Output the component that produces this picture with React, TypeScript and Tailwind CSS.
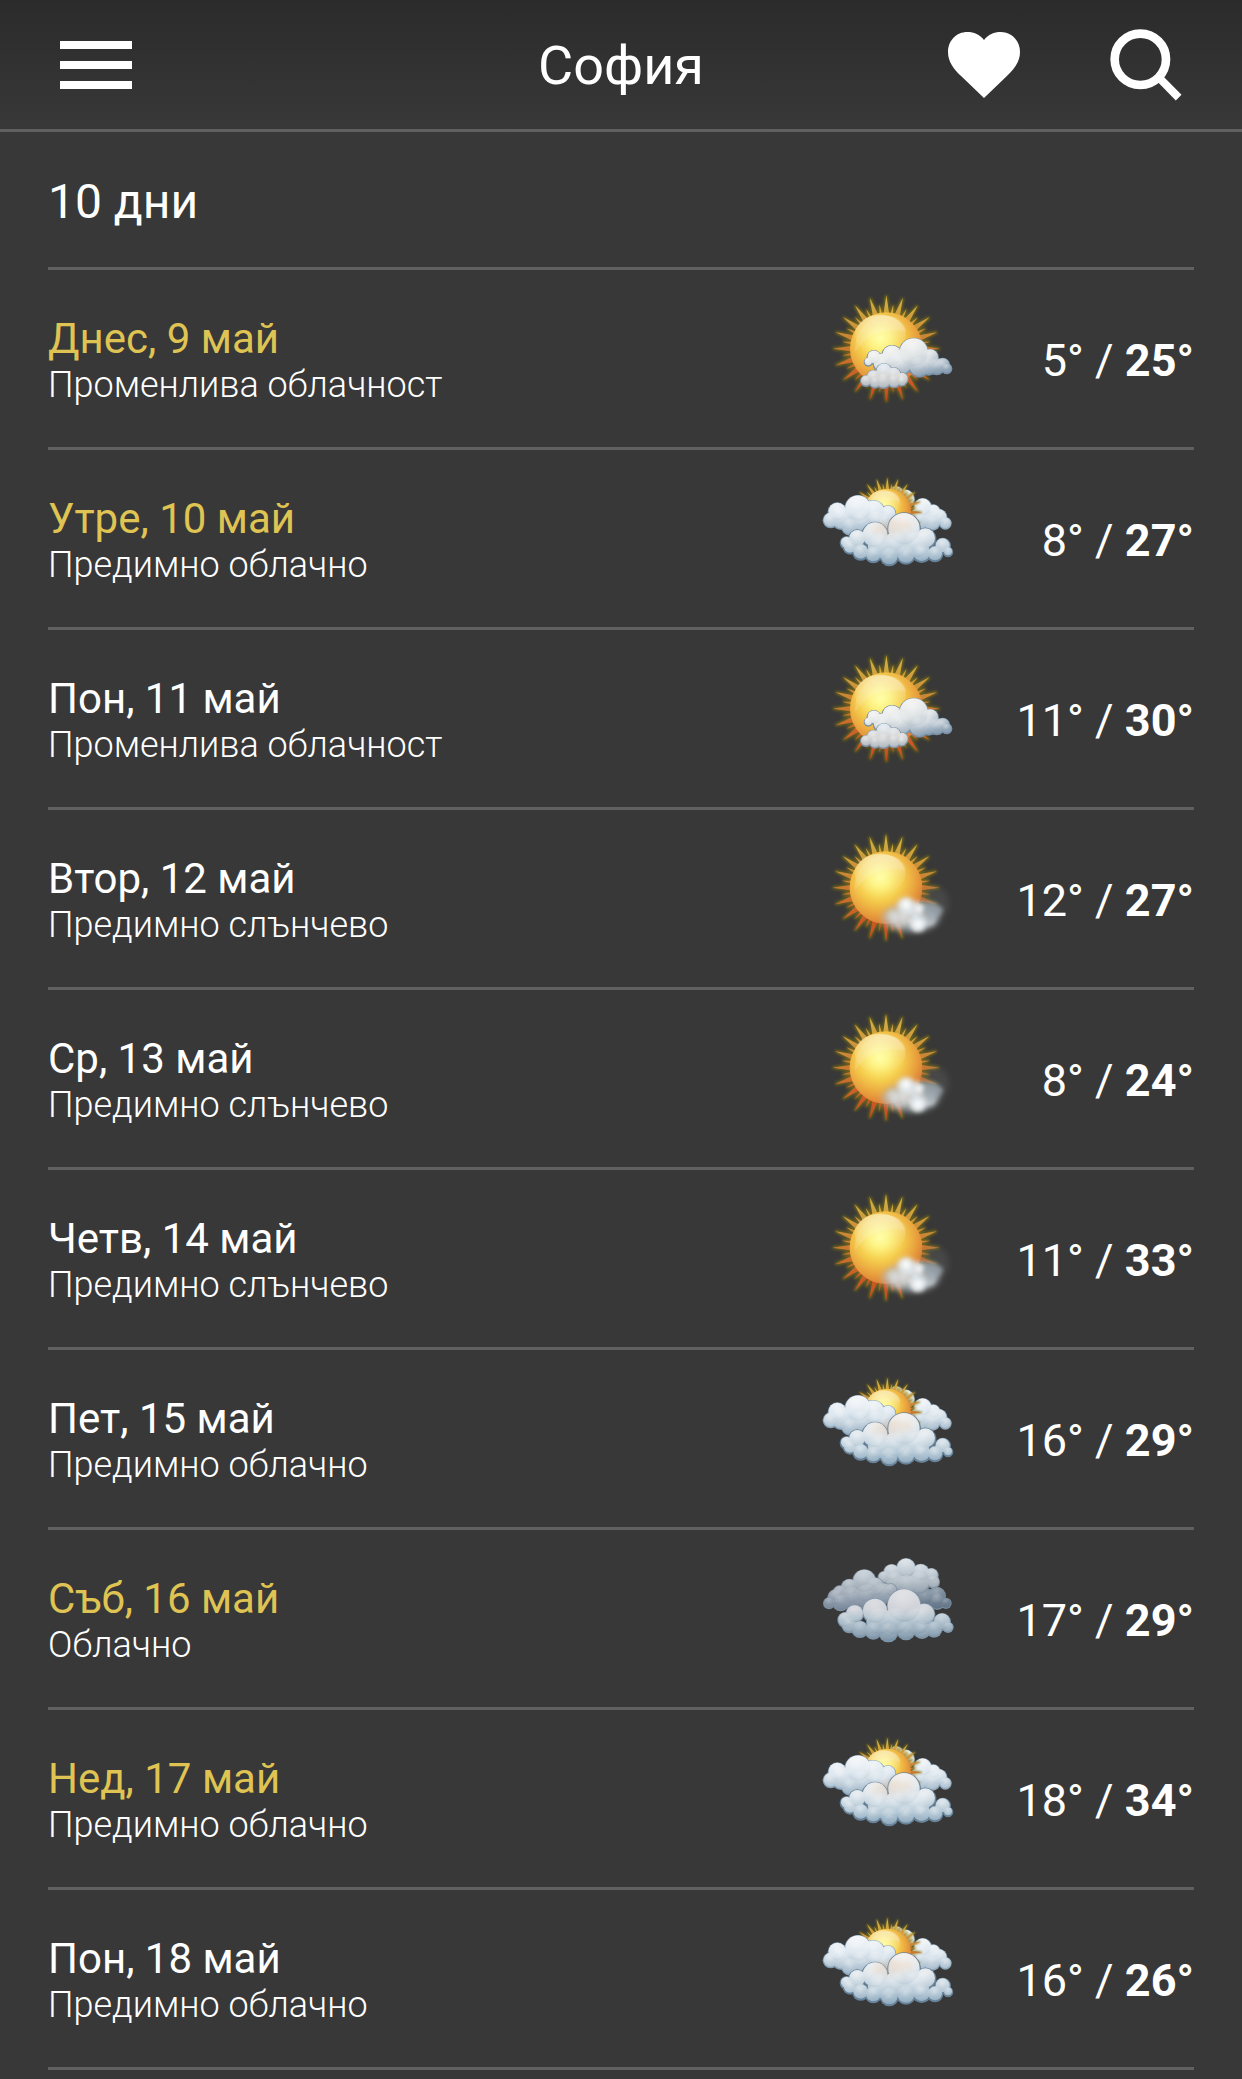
type Sky = 'partly' | 'mostlyCloudy' | 'mostlySunny' | 'cloudy';
type Puff = [cx: number, cy: number, r: number];

const DAYS: { day: string; text: string; sky: Sky; min: number; max: number; accent?: boolean }[] = [
  { day: 'Днес, 9 май', text: 'Променлива облачност', sky: 'partly', min: 5, max: 25, accent: true },
  { day: 'Утре, 10 май', text: 'Предимно облачно', sky: 'mostlyCloudy', min: 8, max: 27, accent: true },
  { day: 'Пон, 11 май', text: 'Променлива облачност', sky: 'partly', min: 11, max: 30 },
  { day: 'Втор, 12 май', text: 'Предимно слънчево', sky: 'mostlySunny', min: 12, max: 27 },
  { day: 'Ср, 13 май', text: 'Предимно слънчево', sky: 'mostlySunny', min: 8, max: 24 },
  { day: 'Четв, 14 май', text: 'Предимно слънчево', sky: 'mostlySunny', min: 11, max: 33 },
  { day: 'Пет, 15 май', text: 'Предимно облачно', sky: 'mostlyCloudy', min: 16, max: 29 },
  { day: 'Съб, 16 май', text: 'Облачно', sky: 'cloudy', min: 17, max: 29, accent: true },
  { day: 'Нед, 17 май', text: 'Предимно облачно', sky: 'mostlyCloudy', min: 18, max: 34, accent: true },
  { day: 'Пон, 18 май', text: 'Предимно облачно', sky: 'mostlyCloudy', min: 16, max: 26 },
];

// 20 long rays with a short one between each pair
const RAYS = Array.from({ length: 40 }, (_, i) => {
  const a = (i * Math.PI) / 20;
  const long = i % 2 === 0;
  const tip = long ? 160 : 133;
  const half = long ? 0.095 : 0.05;
  const at = (r: number, t: number) => `${(r * Math.sin(t)).toFixed(1)} ${(-r * Math.cos(t)).toFixed(1)}`;
  return `M${at(100, a - half)}L${at(tip, a)}L${at(100, a + half)}Z`;
}).join('');

// Gradients and filters shared by all the weather icons
function IconDefs() {
  return (
    <svg className="h-0 w-0" aria-hidden="true">
      <defs>
        <linearGradient id="rays" gradientUnits="userSpaceOnUse" x1="0" y1="-150" x2="0" y2="150">
          <stop offset="0" stopColor="#d3b243" />
          <stop offset="0.5" stopColor="#c9792f" />
          <stop offset="1" stopColor="#cb4a20" />
        </linearGradient>
        <radialGradient id="disc" gradientUnits="userSpaceOnUse" cx="-18" cy="-28" r="135">
          <stop offset="0" stopColor="#ffff9c" />
          <stop offset="0.22" stopColor="#fdf17a" />
          <stop offset="0.5" stopColor="#f5cd4d" />
          <stop offset="0.78" stopColor="#eaa53e" />
          <stop offset="1" stopColor="#df8238" />
        </radialGradient>
        <linearGradient id="gloss" x1="0" y1="0" x2="0" y2="1">
          <stop offset="0" stopColor="#fff" stopOpacity="0.5" />
          <stop offset="0.6" stopColor="#fff" stopOpacity="0.12" />
          <stop offset="1" stopColor="#fff" stopOpacity="0" />
        </linearGradient>
        <radialGradient id="puff" cx="0.45" cy="0.3" r="0.7">
          <stop offset="0" stopColor="#fff" stopOpacity="0.4" />
          <stop offset="0.6" stopColor="#fff" stopOpacity="0.04" />
          <stop offset="1" stopColor="#6f8ca6" stopOpacity="0.12" />
        </radialGradient>
        <radialGradient id="dullPuff" cx="0.45" cy="0.25" r="0.75">
          <stop offset="0" stopColor="#fff" stopOpacity="0.24" />
          <stop offset="0.6" stopColor="#fff" stopOpacity="0.02" />
          <stop offset="1" stopColor="#4f6375" stopOpacity="0.14" />
        </radialGradient>
        <linearGradient id="creamCloud" gradientUnits="userSpaceOnUse" x1="230" y1="165" x2="265" y2="285">
          <stop offset="0" stopColor="#f5f5f1" />
          <stop offset="0.5" stopColor="#dbe0e2" />
          <stop offset="1" stopColor="#8ba0b3" />
        </linearGradient>
        <linearGradient id="smallCloud" gradientUnits="userSpaceOnUse" x1="0" y1="235" x2="0" y2="312">
          <stop offset="0" stopColor="#dbe7f3" />
          <stop offset="0.5" stopColor="#d5d5d3" />
          <stop offset="1" stopColor="#b0b8c0" />
        </linearGradient>
        <linearGradient id="backCloud" gradientUnits="userSpaceOnUse" x1="0" y1="60" x2="0" y2="195">
          <stop offset="0" stopColor="#fbfcfd" />
          <stop offset="0.5" stopColor="#dce6ee" />
          <stop offset="1" stopColor="#9db4c6" />
        </linearGradient>
        <linearGradient id="frontCloud" gradientUnits="userSpaceOnUse" x1="0" y1="130" x2="0" y2="285">
          <stop offset="0" stopColor="#f1eeec" />
          <stop offset="0.4" stopColor="#dde5eb" />
          <stop offset="0.75" stopColor="#b4c8d6" />
          <stop offset="1" stopColor="#8ba7bc" />
        </linearGradient>
        <linearGradient id="greyCloud" gradientUnits="userSpaceOnUse" x1="0" y1="25" x2="0" y2="180">
          <stop offset="0" stopColor="#d8e1e8" />
          <stop offset="0.5" stopColor="#a9b4be" />
          <stop offset="1" stopColor="#77869a" />
        </linearGradient>
        <linearGradient id="steelCloud" gradientUnits="userSpaceOnUse" x1="0" y1="90" x2="0" y2="185">
          <stop offset="0" stopColor="#8d9ba9" />
          <stop offset="1" stopColor="#586c80" />
        </linearGradient>
        <linearGradient id="rainCloud" gradientUnits="userSpaceOnUse" x1="0" y1="118" x2="0" y2="278">
          <stop offset="0" stopColor="#dcdce0" />
          <stop offset="0.38" stopColor="#cdd1d7" />
          <stop offset="0.55" stopColor="#b3c4d0" />
          <stop offset="1" stopColor="#7991a5" />
        </linearGradient>
        <filter id="glow" x="-20%" y="-20%" width="140%" height="140%">
          <feGaussianBlur stdDeviation="5" />
        </filter>
        <filter id="haze" x="-50%" y="-50%" width="200%" height="200%">
          <feGaussianBlur stdDeviation="9" />
        </filter>
        <filter id="soft" x="-50%" y="-50%" width="200%" height="200%">
          <feGaussianBlur stdDeviation="6" />
        </filter>
      </defs>
    </svg>
  );
}

function Sun({ x, y, scale = 1 }: { x: number; y: number; scale?: number }) {
  return (
    <g transform={`translate(${x} ${y}) scale(${scale})`}>
      <path d={RAYS} fill="none" stroke="#8a7a10" strokeWidth="7" opacity="0.75" filter="url(#glow)" />
      <path d={RAYS} fill="url(#rays)" />
      <circle r="109" fill="url(#disc)" />
      <ellipse cx="-18" cy="-42" rx="76" ry="60" fill="url(#gloss)" />
      <path d="M-93 10C-98 -55 -55 -98 0 -98C32 -98 58 -80 60 -52C0 -62 -55 -50 -93 10Z" fill="#fff" opacity="0.14" />
    </g>
  );
}

function Cloud({ puffs, fill, rim, shade = 3, relief = 'url(#puff)' }: {
  puffs: Puff[];
  fill: string;
  rim: string;
  shade?: number;
  relief?: string;
}) {
  return (
    <g>
      {puffs.map(([cx, cy, r], i) => (
        <circle key={i} cx={cx} cy={cy} r={r} fill={rim} />
      ))}
      {puffs.map(([cx, cy, r], i) => (
        <circle key={i} cx={cx} cy={cy - shade / 2} r={r - shade} fill={fill} />
      ))}
      {puffs.map(([cx, cy, r], i) => (
        <circle key={i} cx={cx} cy={cy - shade / 2} r={r - shade} fill={relief} />
      ))}
    </g>
  );
}

const CREAM: Puff[] = [
  [380, 251, 17], [368, 241, 23], [350, 245, 26], [145, 231, 14], [162, 217, 22], [190, 235, 32], [216, 212, 32],
  [240, 235, 38], [330, 218, 27], [325, 242, 30], [298, 246, 32], [281, 203, 45],
];
const SMALL: Puff[] = [
  [138, 288, 18], [160, 276, 22], [165, 293, 18], [246, 282, 20], [220, 270, 24], [192, 260, 26], [190, 288, 24],
  [222, 290, 20], [245, 290, 15],
];
const BACK_RIGHT: Puff[] = [
  [228, 72, 24], [255, 88, 30], [376, 160, 19], [356, 142, 26], [340, 125, 22], [308, 112, 28], [300, 145, 34],
  [335, 155, 28],
];
const BACK_LEFT: Puff[] = [
  [32, 151, 24], [52, 126, 29], [66, 146, 34], [90, 170, 27], [160, 126, 36], [125, 155, 34], [204, 131, 25],
  [170, 155, 32], [195, 155, 28], [114, 116, 41],
];
const FRONT: Puff[] = [
  [80, 219, 21], [90, 232, 22], [112, 206, 28], [122, 246, 26], [160, 254, 26], [384, 246, 16], [368, 228, 25],
  [345, 252, 25], [305, 250, 29], [258, 254, 30], [208, 260, 29], [316, 206, 33], [165, 196, 41], [180, 230, 40],
  [290, 225, 42], [225, 225, 40], [252, 178, 51],
];
const GREY_TOP: Puff[] = [
  [192, 82, 19], [215, 68, 26], [225, 95, 30], [260, 105, 32], [296, 98, 34], [340, 96, 20], [334, 76, 22],
  [302, 68, 27], [258, 54, 30],
];
const STEEL: Puff[] = [[378, 160, 17], [350, 138, 28], [352, 155, 25], [315, 148, 34]];
const GREY_LEFT: Puff[] = [
  [27, 160, 18], [46, 142, 24], [60, 130, 24], [62, 158, 26], [88, 112, 26], [95, 145, 35], [212, 120, 20],
  [190, 130, 32], [165, 112, 30], [140, 140, 38], [133, 94, 36],
];
const RAIN: Puff[] = [
  [76, 210, 24], [88, 226, 24], [104, 192, 28], [120, 238, 26], [160, 242, 27], [384, 232, 17], [366, 216, 27],
  [342, 238, 25], [306, 240, 27], [258, 242, 29], [205, 247, 30], [312, 194, 34], [165, 184, 39], [180, 215, 42],
  [290, 215, 42], [225, 215, 42], [252, 168, 52],
];

function WeatherIcon({ sky, label }: { sky: Sky; label: string }) {
  return (
    <svg viewBox="0 0 420 441" className="w-[140px] shrink-0" role="img" aria-label={label}>
      {sky === 'partly' && (
        <>
          <Sun x={199} y={191} />
          <Cloud puffs={CREAM} fill="url(#creamCloud)" rim="#788fa5" />
          <Cloud puffs={SMALL} fill="url(#smallCloud)" rim="#8494a4" />
        </>
      )}
      {sky === 'mostlySunny' && (
        <>
          <Sun x={198} y={188} />
          <g filter="url(#haze)">
            <ellipse cx="272" cy="278" rx="86" ry="42" fill="#b4bcc1" opacity="0.75" />
            <ellipse cx="345" cy="235" rx="42" ry="50" fill="#6a6a6a" opacity="0.3" />
          </g>
          <g filter="url(#soft)" fill="#dfe6ea">
            <circle cx="220" cy="272" r="18" opacity="0.55" />
            <circle cx="258" cy="242" r="27" opacity="0.85" />
            <circle cx="236" cy="286" r="22" opacity="0.45" />
            <circle cx="292" cy="252" r="23" opacity="0.7" />
            <circle cx="266" cy="272" r="26" opacity="0.6" />
            <circle cx="294" cy="296" r="26" opacity="0.9" />
            <circle cx="328" cy="284" r="19" opacity="0.6" />
            <path d="M300 236C335 226 360 236 370 256C362 274 345 290 320 292Z" fill="#9ea9b0" opacity="0.8" />
            <circle cx="258" cy="238" r="13" fill="#f7fafc" />
            <circle cx="298" cy="250" r="10" fill="#f7fafc" />
            <circle cx="295" cy="298" r="13" fill="#f7fafc" />
          </g>
        </>
      )}
      {sky === 'mostlyCloudy' && (
        <g transform="translate(0 15)">
          <Cloud puffs={BACK_RIGHT} fill="url(#backCloud)" rim="#8fa8bb" />
          <Sun x={202} y={127} scale={0.65} />
          <Cloud puffs={BACK_LEFT} fill="url(#backCloud)" rim="#87a2b8" />
          <Cloud puffs={FRONT} fill="url(#frontCloud)" rim="#688399" shade={4} />
          <path
            d="M150 182L178 200L172 178L200 205L208 180L222 206L236 178L250 200L256 172L274 186L272 158C230 140 180 150 150 182Z"
            fill="#e9c7a8"
            opacity="0.3"
            filter="url(#soft)"
          />
        </g>
      )}
      {sky === 'cloudy' && (
        <g transform="translate(0 15)">
          <Cloud puffs={STEEL} fill="url(#steelCloud)" rim="#76899b" relief="url(#dullPuff)" />
          <Cloud puffs={GREY_TOP} fill="url(#greyCloud)" rim="#8696a5" relief="url(#dullPuff)" />
          <Cloud puffs={GREY_LEFT} fill="url(#greyCloud)" rim="#7f8d9c" relief="url(#dullPuff)" />
          <Cloud puffs={RAIN} fill="url(#rainCloud)" rim="#7f97aa" relief="url(#dullPuff)" />
        </g>
      )}
    </svg>
  );
}

function Header() {
  return (
    <header className="grid grid-cols-3 items-center border-b-3 border-[#606060] bg-linear-to-b from-[#2b2b2b] to-[#383838] px-15 py-7">
      <button type="button" aria-label="Меню" className="flex w-18 flex-col gap-3 justify-self-start">
        <span className="h-2 w-full bg-white" />
        <span className="h-2 w-full bg-white" />
        <span className="h-2 w-full bg-white" />
      </button>
      <h1 className="pt-0.5 text-center text-[54px] leading-[71px]">София</h1>
      <div className="flex items-center gap-[90px] justify-self-end">
        <button type="button" aria-label="Любими">
          <svg viewBox="0 0 216 198" className="w-18" fill="#fff">
            <path d="M108 24C95 8 78 0 58 0C25 0 0 26 0 60C0 90 18 112 40 133L108 198L176 133C198 112 216 90 216 60C216 26 191 0 158 0C138 0 121 8 108 24Z" />
          </svg>
        </button>
        <button type="button" aria-label="Търсене">
          <svg viewBox="0 0 216 216" className="w-18" fill="none" stroke="#fff" strokeWidth="26">
            <circle cx="91" cy="91" r="77" />
            <path d="M148 147L206 206" strokeWidth="24" />
          </svg>
        </button>
      </div>
    </header>
  );
}

export default function App() {
  return (
    <div className="min-h-screen bg-[#383838] font-['Roboto',sans-serif] text-white">
      <IconDefs />
      <Header />
      <main className="px-12">
        <h2 className="border-b-3 border-[#606060] pt-9 pb-8 text-[48px] leading-[67px]">10 дни</h2>
        <ul>
          {DAYS.map((d) => (
            <li key={d.day} className="flex items-center border-b-3 border-[#606060] py-[15px]">
              <div className="flex-1 pt-1">
                <h3 className={`text-[42px] leading-[48px] ${d.accent ? 'text-[#dfc353]' : ''}`}>{d.day}</h3>
                <p className="text-[36px] leading-[44px] font-light">{d.text}</p>
              </div>
              <WeatherIcon sky={d.sky} label={d.text} />
              <p className="w-[234px] pt-1 text-right text-[45px]">
                {d.min}° / <b>{d.max}°</b>
              </p>
            </li>
          ))}
        </ul>
      </main>
    </div>
  );
}
